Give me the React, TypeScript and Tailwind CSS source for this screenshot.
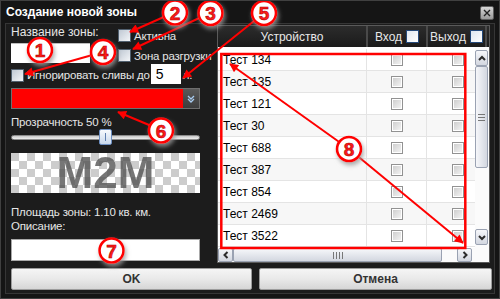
import React from "react";

const rows = ["Тест 134", "Тест 135", "Тест 121", "Тест 30", "Тест 688", "Тест 387", "Тест 854", "Тест 2469", "Тест 3522"];

function DarkCheck() {
  return <div className="w-[13px] h-[13px] shrink-0 border border-[#51606f] bg-gradient-to-br from-[#bfc8d3] to-[#f3f5f8]" />;
}
function HeadCheck() {
  return <div className="w-[13px] h-[13px] shrink-0 border border-[#24497a] bg-gradient-to-br from-[#dfe7f0] to-white" />;
}
function GrayCheck() {
  return (
    <div className="w-[12px] h-[12px] shrink-0 border border-[#929292] p-[1px] bg-white">
      <div className="w-full h-full bg-gradient-to-br from-[#cfcfcf] to-[#f2f2f2]" />
    </div>
  );
}

function Chevron({ dir }: { dir: "up" | "down" | "left" | "right" }) {
  const d = {
    up: "M2 7 L5 4 L8 7",
    down: "M2 4 L5 7 L8 4",
    left: "M6.5 2 L3.5 5 L6.5 8",
    right: "M3.5 2 L6.5 5 L3.5 8",
  }[dir];
  return (
    <svg width="10" height="10" viewBox="0 0 10 10">
      <path d={d} fill="none" stroke="#2b2b2b" strokeWidth="2" />
    </svg>
  );
}

function SBtn({ dir, cls }: { dir: "up" | "down" | "left" | "right"; cls: string }) {
  return (
    <div className={`${cls} shrink-0 flex items-center justify-center rounded-[2px] border border-[#9aa2b2] bg-gradient-to-b from-[#f6f7fa] to-[#d3d7e0]`}>
      <Chevron dir={dir} />
    </div>
  );
}

export default function App() {
  return (
    <div className="relative w-[500px] h-[299px] overflow-hidden border border-[#404040] bg-[#151515] font-['Liberation_Sans',Arial,sans-serif] text-[12px] leading-[14px] text-[#e6e6e6] whitespace-nowrap">
      {/* title bar */}
      <div className="h-[22px] flex items-center justify-between pl-[5px] pr-[5px]">
        <div className="text-[12px] font-bold text-white">Создание новой зоны</div>
        <div className="w-[14px] h-[14px] mt-[1px] rounded-[2px] border border-[#5e5e5e] bg-gradient-to-b from-[#d6d6d6] to-[#9a9a9a] flex items-center justify-center">
          <svg width="10" height="10" viewBox="0 0 10 10">
            <path d="M2 2 L8 8 M8 2 L2 8" stroke="#222" strokeWidth="1.4" />
          </svg>
        </div>
      </div>

      {/* inner panel */}
      <div className="mx-[4px] h-[271px] border border-[#363636] bg-[#1c1c1c] flex flex-col">
        <div className="flex h-[239px]">
          {/* left column */}
          <div className="w-[194px] shrink-0 pl-[5px] flex flex-col text-[11.5px] tracking-[-0.2px]">
            <div className="flex">
              <div className="w-[79px] shrink-0 flex flex-col">
                <div className="mt-[1px] h-[14px] text-[12px] tracking-[0px]">Название зоны:</div>
                <div className="mt-[4px] h-[20px] w-[79px] bg-white border-t border-[#bdbdbd]" />
              </div>
              <div className="ml-[28px] mt-[5px] shrink-0 flex flex-col gap-[7px]">
                <div className="flex items-center h-[13px] gap-[3px]">
                  <DarkCheck />
                  <span>Активна</span>
                </div>
                <div className="flex items-center h-[13px] gap-[3px]">
                  <DarkCheck />
                  <span>Зона разгрузки</span>
                </div>
              </div>
            </div>
            <div className="flex items-center h-[21px]">
              <div className="mt-[3px] flex items-center gap-[3px] shrink-0">
                <DarkCheck />
                <span>Игнорировать сливы до</span>
              </div>
              <div className="ml-[1px] w-[30px] h-[20px] shrink-0 bg-white text-black text-[14px] leading-[20px] pl-[5px]">5</div>
              <span className="ml-[2px] mt-[3px]">л.</span>
            </div>
            <div className="mt-[4px] w-[189px] h-[21px] flex border border-[#6e6e6e]">
              <div className="flex-1 bg-[#ff0000]" />
              <div className="w-[16px] bg-gradient-to-b from-[#5a5a5a] to-[#3c3c3c] flex items-center justify-center">
                <svg width="10" height="10" viewBox="0 0 10 10">
                  <path d="M2 2 L5 5 L8 2 M2 5 L5 8 L8 5" fill="none" stroke="#a9cdf2" strokeWidth="1.3" />
                </svg>
              </div>
            </div>
            <div className="mt-[6px] h-[14px]">Прозрачность 50 %</div>
            <div className="relative h-[16px] w-[189px] flex items-center">
              <div className="w-full h-[5px] rounded-[3px] border border-[#8c8c8c] bg-gradient-to-b from-[#c8c8c8] to-[#eeeeee]" />
              <div className="absolute left-[88px] top-0 w-[13px] h-[16px] rounded-[2px] border border-[#6d8fc2] bg-gradient-to-b from-[#f7fafd] to-[#c9d8ec] flex justify-center items-center">
                <div className="w-[1px] h-[8px] bg-[#5f7fb0]" />
              </div>
            </div>
            <div className="mt-[8px] w-[189px] h-[40px] bg-[conic-gradient(#ffffff_25%,#cccccc_0_50%,#ffffff_0_75%,#cccccc_0)] bg-[length:16px_16px] flex items-center justify-center">
              <span className="text-[44px] leading-[40px] font-bold text-[#555555] opacity-80 tracking-[0px]">M2M</span>
            </div>
            <div className="mt-[12px] h-[14px]">Площадь зоны: 1.10 кв. км.</div>
            <div className="h-[14px]">Описание:</div>
            <div className="mt-[6px] w-[189px] h-[22px] bg-white border border-[#a8a8a8]" />
          </div>

          {/* table */}
          <div className="ml-[17px] mt-[1px] w-[273px] shrink-0 h-[238px] border border-[#5a5a5a] flex flex-col bg-white">
            <div className="h-[21px] flex bg-gradient-to-b from-[#2c2c2c] to-[#1b1b1b] text-[#e8e8e8]">
              <div className="w-[150px] flex items-center justify-center border-r-2 border-[#4a4a4a]">Устройство</div>
              <div className="w-[60px] flex items-center justify-center gap-[4px] border-r-2 border-[#4a4a4a]">
                <span>Вход</span>
                <HeadCheck />
              </div>
              <div className="w-[59px] flex items-center justify-center gap-[4px] border-r-2 border-[#4a4a4a]">
                <span>Выход</span>
                <HeadCheck />
              </div>
            </div>
            <div className="flex h-[201px]">
              <div className="w-[257px] pt-[2px] text-black overflow-hidden">
                {rows.map((r, i) => (
                  <div key={r} className={`flex h-[22px] border-b border-[#e4e4e4] ${i % 2 === 1 ? "bg-[#f7f7f7]" : "bg-white"}`}>
                    <div className="w-[149px] pl-[5px] flex items-center border-r border-[#e4e4e4]">{r}</div>
                    <div className="w-[60px] flex items-center justify-center border-r border-[#e4e4e4]">
                      <GrayCheck />
                    </div>
                    <div className="w-[48px] flex items-center pl-[25px]">
                      <GrayCheck />
                    </div>
                  </div>
                ))}
              </div>
              <div className="w-[14px] pt-[3px] pb-[3px] flex flex-col bg-[#fbfbfb]">
                <SBtn dir="up" cls="h-[16px] w-[13px]" />
                <div className="h-[102px] w-[13px] rounded-[2px] border border-[#9aa2b2] bg-gradient-to-r from-[#f6f7fa] to-[#d3d7e0] flex flex-col items-center justify-center gap-[2px]">
                  <div className="w-[7px] h-[1px] bg-[#777]" />
                  <div className="w-[7px] h-[1px] bg-[#777]" />
                  <div className="w-[7px] h-[1px] bg-[#777]" />
                </div>
                <div className="flex-1" />
                <SBtn dir="down" cls="h-[16px] w-[13px]" />
              </div>
            </div>
            <div className="flex h-[14px] bg-[#fbfbfb]">
              <SBtn dir="left" cls="w-[15px] h-[14px]" />
              <div className="w-[209px] h-[14px] rounded-[2px] border border-[#9aa2b2] bg-gradient-to-b from-[#f6f7fa] to-[#d3d7e0] flex items-center justify-center gap-[2px]">
                <div className="w-[1px] h-[7px] bg-[#777]" />
                <div className="w-[1px] h-[7px] bg-[#777]" />
                <div className="w-[1px] h-[7px] bg-[#777]" />
                <div className="w-[1px] h-[7px] bg-[#777]" />
              </div>
              <div className="w-[15px]" />
              <SBtn dir="right" cls="w-[15px] h-[14px]" />
            </div>
          </div>
        </div>

        {/* buttons */}
        <div className="mt-[5px] pl-[5px] flex gap-[7px]">
          <div className="w-[241px] h-[22px] rounded-[2px] border border-[#9c9c9c] bg-gradient-to-b from-[#f5f5f5] via-[#e9e9e9] to-[#d6d6d6] flex items-center justify-center font-bold text-[#333]">OK</div>
          <div className="w-[233px] h-[22px] rounded-[2px] border border-[#9c9c9c] bg-gradient-to-b from-[#f5f5f5] via-[#e9e9e9] to-[#d6d6d6] flex items-center justify-center font-bold text-[#333]">Отмена</div>
        </div>
      </div>

      {/* annotations */}
      <svg className="absolute left-[-1px] top-[-1px] pointer-events-none" width="500" height="299" viewBox="0 0 500 299">
        <defs>
          <marker id="ah" viewBox="0 0 10 10" refX="9" refY="5" markerWidth="11" markerHeight="9" markerUnits="userSpaceOnUse" orient="auto">
            <path d="M0 0 L10 5 L0 10 z" fill="#ff0000" />
          </marker>
          <filter id="sh" x="-60%" y="-60%" width="220%" height="220%">
            <feDropShadow dx="1.5" dy="3" stdDeviation="2" floodColor="#9a9a9a" floodOpacity="0.8" />
          </filter>
        </defs>
        <rect x="221.3" y="54" width="244" height="194" fill="none" stroke="#ff0000" strokeWidth="2.5" />
        <g stroke="#ff0000" strokeWidth="2" fill="none">
          <line x1="175" y1="12" x2="130" y2="32" markerEnd="url(#ah)" />
          <line x1="210" y1="13" x2="133" y2="49" markerEnd="url(#ah)" />
          <line x1="103" y1="52" x2="25" y2="74" markerEnd="url(#ah)" />
          <line x1="264" y1="13" x2="183" y2="78" markerEnd="url(#ah)" />
          <line x1="161" y1="130" x2="118" y2="112" markerEnd="url(#ah)" />
          <line x1="349" y1="149" x2="230" y2="64" markerEnd="url(#ah)" />
          <line x1="349" y1="149" x2="463" y2="243" markerEnd="url(#ah)" />
        </g>
        {[
          [40, 50, "1"],
          [175, 12.5, "2"],
          [210.5, 13, "3"],
          [103, 52, "4"],
          [264, 13, "5"],
          [161, 130.5, "6"],
          [111.5, 250.5, "7"],
          [349, 149, "8"],
        ].map(([cx, cy, n]) => (
          <g key={n as string}>
            <circle cx={cx as number} cy={cy as number} r="12" fill="#ffffff" stroke="#ff0000" strokeWidth="2.6" filter="url(#sh)" />
            <text x={cx as number} y={(cy as number) + 7} textAnchor="middle" fontFamily="'Liberation Sans', Arial, sans-serif" fontWeight="bold" fontSize="19" fill="#ff1a1a" stroke="#b00000" strokeWidth="0.6">
              {n}
            </text>
          </g>
        ))}
      </svg>
    </div>
  );
}
